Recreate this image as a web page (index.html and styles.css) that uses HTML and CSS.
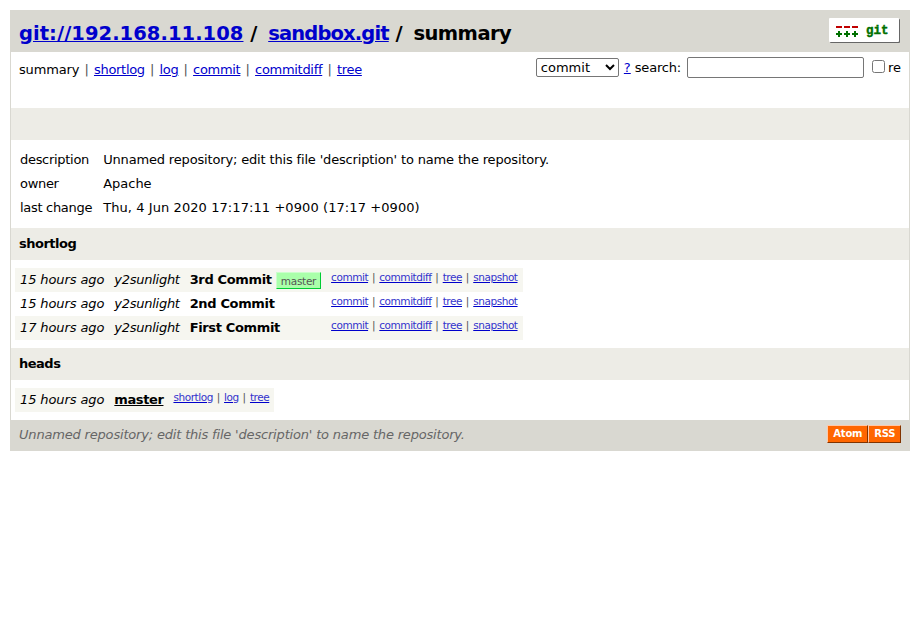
FILE: index.html
```html
<!DOCTYPE html>
<html>
<head>
<meta charset="utf-8">
<title>sandbox.git / summary</title>
<link rel="stylesheet" href="styles.css">
</head>
<body>
<div class="page-header">
  <a class="logo" href="#" aria-label="git">
    <svg width="70" height="24" viewBox="0 0 70 24" class="logo-svg">
      <rect x="7" y="8" width="6" height="2" fill="#c00000"/>
      <rect x="15" y="8" width="6" height="2" fill="#c00000"/>
      <rect x="23" y="8" width="6" height="2" fill="#c00000"/>
      <path d="M7 15h6v2H7zM9 13h2v6H9zM15 15h6v2h-6zM17 13h2v6h-2zM23 15h6v2h-6zM25 13h2v6h-2z" fill="#007000"/>
      <text x="37" y="16" class="logo-text">git</text>
    </svg>
  </a>
  <a class="crumb-host" href="#">git://192.168.11.108</a> / <a class="crumb-repo" href="#">sandbox.git</a> / <span class="crumb-page">summary</span>
</div>
<form class="search">
  <select class="search-select"><option>commit</option></select>
  <a href="#">?</a> <span class="search-label">search:</span>
  <input class="search-input" type="text">
  <label class="search-re"><input class="search-check" type="checkbox">re</label>
</form>
<div class="page-nav">
  <span class="nav-current">summary</span> <span class="sep">|</span> <a href="#">shortlog</a> <span class="sep">|</span> <a href="#">log</a> <span class="sep">|</span> <a href="#">commit</a> <span class="sep">|</span> <a href="#">commitdiff</a> <span class="sep">|</span> <a href="#">tree</a>
</div>
<div class="title"></div>
<table class="projects-list">
  <tr><td class="meta-key">description</td><td class="meta-desc">Unnamed repository; edit this file 'description' to name the repository.</td></tr>
  <tr><td class="meta-key">owner</td><td>Apache</td></tr>
  <tr><td class="meta-key">last change</td><td class="meta-date">Thu, 4 Jun 2020 17:17:11 +0900 (17:17 +0900)</td></tr>
</table>
<div class="title">shortlog</div>
<table class="list shortlog">
  <tr class="light">
    <td class="age">15 hours ago</td><td class="author">y2sunlight</td>
    <td class="subject"><b>3rd Commit</b> <span class="ref">master</span></td>
    <td class="link"><a href="#">commit</a> | <a href="#">commitdiff</a> | <a href="#">tree</a> | <a href="#">snapshot</a></td>
  </tr>
  <tr>
    <td class="age">15 hours ago</td><td class="author">y2sunlight</td>
    <td class="subject"><b>2nd Commit</b></td>
    <td class="link"><a href="#">commit</a> | <a href="#">commitdiff</a> | <a href="#">tree</a> | <a href="#">snapshot</a></td>
  </tr>
  <tr class="light">
    <td class="age">17 hours ago</td><td class="author">y2sunlight</td>
    <td class="subject"><b>First Commit</b></td>
    <td class="link"><a href="#">commit</a> | <a href="#">commitdiff</a> | <a href="#">tree</a> | <a href="#">snapshot</a></td>
  </tr>
</table>
<div class="title">heads</div>
<table class="list heads">
  <tr class="light">
    <td class="age">15 hours ago</td>
    <td class="subject"><a class="head" href="#">master</a></td>
    <td class="link"><a href="#">shortlog</a> | <a href="#">log</a> | <a href="#">tree</a></td>
  </tr>
</table>
<div class="page-footer">
  <div class="feeds"><a class="rss" href="#">Atom</a><a class="rss" href="#">RSS</a></div>
  <div class="footer-text">Unnamed repository; edit this file 'description' to name the repository.</div>
</div>
</body>
</html>
```
FILE: styles.css
```css
html { background: #fff; }
body {
  font-family: "DejaVu Sans", sans-serif;
  font-size: 13px;
  line-height: 16px;
  color: #000;
  background: #fff;
  border: 1px solid #d9d8d1;
  border-top-width: 0;
  border-bottom-width: 0;
  margin: 10px;
}
a { color: #0000cc; }
.page-header {
  background: #d9d8d1;
  font-size: 19.5px;
  font-weight: bold;
  padding: 8px;
  height: 26px;
  line-height: 32px;
  word-spacing: 2px;
}
.crumb-host { letter-spacing: 0.05px; margin-right: -2px; }
.crumb-repo { letter-spacing: -0.85px; margin: 0 -2px 0 2px; }
.crumb-page { letter-spacing: -0.55px; margin-left: 2px; }
.logo { float: right; margin: 0 2px 0 0; height: 24px; }
.logo-svg { display: block; background: #fff; box-shadow: 1px 1px 0 #666; border-radius: 1px; }
.logo-text { font-family: "Liberation Mono", monospace; font-size: 12.5px; font-weight: bold; fill: #007000; stroke: #007000; stroke-width: 0.4px; }
.search { float: right; margin: 5px 8px 0 0; display: flex; align-items: center; height: 21px; gap: 4px; }
.search-select { width: 83px; height: 19px; margin-right: 1px; font: 13px "DejaVu Sans", sans-serif; padding: 0; background: #fff; border: 1px solid #767676; border-radius: 2px; }
.search-label { letter-spacing: -0.2px; margin-right: 2px; }
.search-input { width: 177px; height: 21px; box-sizing: border-box; margin: 0; border: 1px solid #767676; border-radius: 2px; padding: 0 2px; }
.search-re { display: flex; align-items: center; margin-left: 4px; }
.search-check { margin: 0 3px 3px 0; width: 13px; height: 13px; }
.page-nav { padding: 10px 8px 22px; height: 24px; word-spacing: 1px; }
.nav-current { letter-spacing: -0.15px; }
.page-nav a { letter-spacing: -0.3px; }
.sep { color: #555; }
.title {
  background: #edece6;
  font-weight: bold;
  padding: 8px;
  height: 16px;
  letter-spacing: -0.5px;
}
table { border-spacing: 0; border-collapse: separate; }
td { padding: 4px 5px; vertical-align: top; white-space: nowrap; }
.projects-list { margin: 8px 4px; }
.projects-list .meta-key { letter-spacing: -0.3px; padding-right: 6px; }
.meta-desc { letter-spacing: -0.16px; }
.meta-date { letter-spacing: 0.08px; }
.list { margin: 8px 4px; }
.light { background: #f6f6f0; }
.age { font-style: italic; letter-spacing: -0.1px; }
.author { font-style: italic; letter-spacing: -0.27px; }
.subject b { font-weight: bold; letter-spacing: -0.35px; }
.link { font-size: 10.5px; line-height: 12px; color: #555; padding: 3px 5px 0; word-spacing: 0.5px; }
.link a { color: #3333cc; text-decoration-color: #0000cc; letter-spacing: -0.45px; }
.ref { display: inline-block; font-size: 10.5px; line-height: 14px; font-weight: normal; letter-spacing: -0.3px; background: #aaffaa; color: #555; border: 1px solid; border-color: #ccffcc #00cc33 #00cc33 #ccffcc; padding: 1px 4px 0; margin-bottom: -2px; vertical-align: top; }
.head { font-weight: bold; color: #000; letter-spacing: -0.4px; }
.page-footer { background: #d9d8d1; color: #666; font-style: italic; height: 31px; }
.footer-text { padding: 7px 8px; letter-spacing: -0.18px; }
.feeds { float: right; display: flex; margin: 5px 8px 0 0; font-style: normal; }
.rss { background: #ff6600; color: #fff; font: bold 10px "DejaVu Sans", sans-serif; letter-spacing: -0.2px; text-decoration: none; border: 1px solid; border-color: #ffc8a8 #803300 #803300 #ffc8a8; padding: 0 5px; line-height: 16px; }
.rss + .rss { padding: 0 4.8px; }
```
